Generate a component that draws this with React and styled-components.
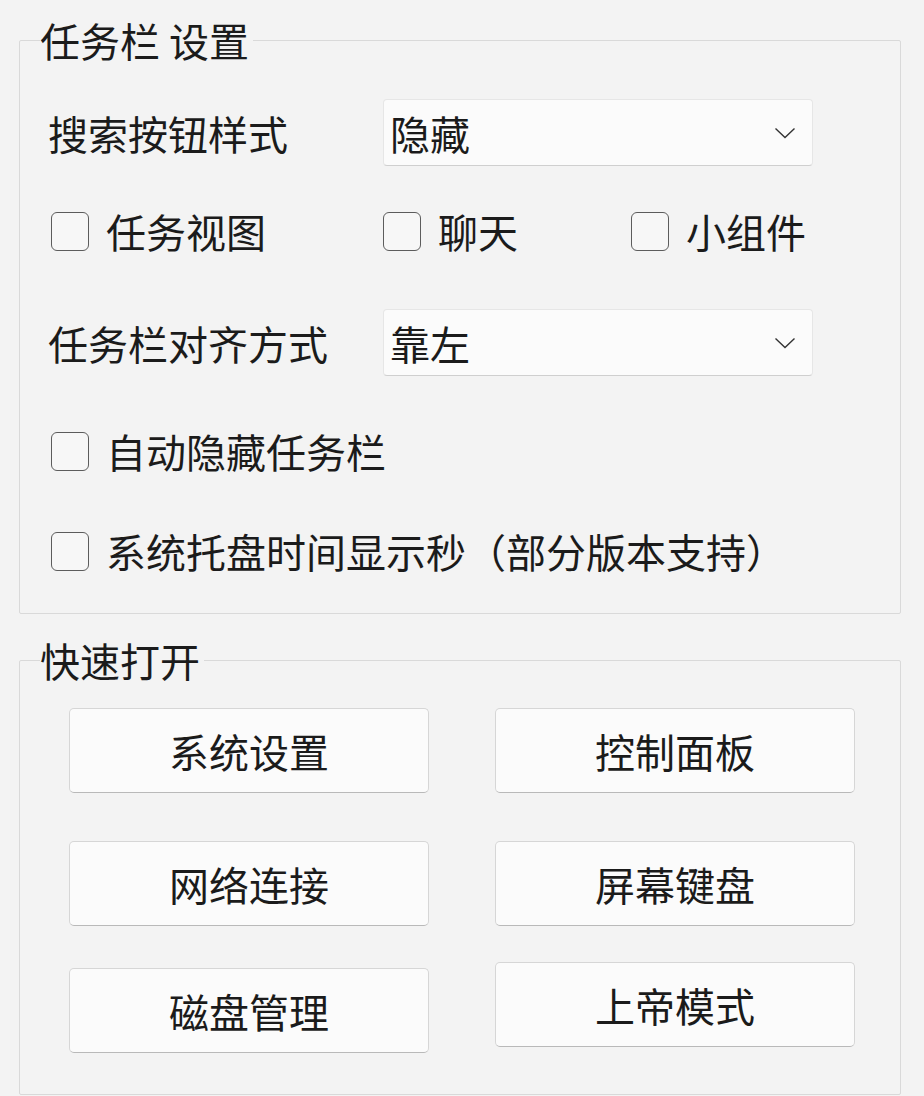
import styled, { createGlobalStyle } from 'styled-components'

const Global = createGlobalStyle`
    html, body {
        margin: 0;
        padding: 0;
        background: #f3f3f3;
    }
    body {
        font-family: "Noto Sans CJK SC", "Noto Sans", sans-serif;
        color: #1b1b1b;
    }
`
const Page = styled.div`
    padding: 17px 23px 4px 19px;
    display: flex;
    flex-direction: column;
`
const Group = styled.fieldset`
    margin: ${p => p.$gap || 0}px 0 0 0;
    padding: 0 ${p => p.$right}px ${p => p.$bottom}px ${p => p.$left}px;
    border: 1px solid #d9d9d9;
    border-radius: 2px;
    min-width: 0;
`
const Legend = styled.legend`
    margin-left: ${p => p.$shift}px;
    padding: 0 4px 0 0;
    font-size: 40px;
    line-height: 46px;
`
const Body = styled.div`
    display: flex;
    flex-direction: column;
`
const SelectRow = styled.div`
    display: grid;
    grid-template-columns: 335px 430px;
    align-items: center;
    margin-top: ${p => p.$top}px;
`
const Label = styled.span`
    font-size: 40px;
    line-height: 46px;
    white-space: nowrap;
`
const Select = styled.div`
    height: 67px;
    box-sizing: border-box;
    display: flex;
    align-items: center;
    justify-content: space-between;
    padding: 0 16px 0 6px;
    background: #fbfbfb;
    border: 1px solid #e6e6e6;
    border-bottom-color: #cfcfcf;
    border-radius: 4px;
`
const SelectText = styled.span`
    font-size: 40px;
    line-height: 46px;
`
const CheckRow = styled.div`
    display: flex;
    align-items: center;
    height: 39px;
    margin-top: ${p => p.$top}px;
    padding-left: 3px;
`
const CheckItem = styled.label`
    display: flex;
    align-items: center;
    gap: 17px;
    width: ${p => (p.$w ? `${p.$w}px` : 'auto')};
    height: 39px;
    font-size: 40px;
    line-height: 39px;
    white-space: nowrap;
`
const Box = styled.span`
    width: 38px;
    height: 39px;
    box-sizing: border-box;
    border: 1.5px solid #5c5c5c;
    border-radius: 6px;
    background: #f7f7f7;
    flex: none;
`
const Buttons = styled.div`
    display: grid;
    grid-template-columns: 360px 360px;
    column-gap: 66px;
    align-items: start;
    margin-top: 25px;
`
const Button = styled.button`
    height: 85px;
    margin-top: ${p => p.$top || 0}px;
    box-sizing: border-box;
    background: #fbfbfb;
    border: 1px solid #d6d6d6;
    border-bottom-color: #b9b9b9;
    border-radius: 5px;
    font-family: inherit;
    font-size: 40px;
    color: #1b1b1b;
    padding: 0;
    display: flex;
    align-items: center;
    justify-content: center;
`

const Chevron = () => (
    <svg width="22" height="12" viewBox="0 0 22 12" fill="none">
        <path d="M1.5 1.5 L11 10.5 L20.5 1.5" stroke="#333" strokeWidth="1.4" />
    </svg>
)

const Check = ({ children, w }) => (
    <CheckItem $w={w}>
        <Box />
        {children}
    </CheckItem>
)

const quick = [
    { name: '系统设置', top: 0 },
    { name: '控制面板', top: 0 },
    { name: '网络连接', top: 48 },
    { name: '屏幕键盘', top: 48 },
    { name: '磁盘管理', top: 42 },
    { name: '上帝模式', top: 36 },
]

const App = () => {
    return (
        <Page>
            <Global />
            <Group $left={28} $right={87} $bottom={42}>
                <Legend $shift={-8}>任务栏 设置</Legend>
                <Body>
                    <SelectRow $top={36}>
                        <Label>搜索按钮样式</Label>
                        <Select>
                            <SelectText>隐藏</SelectText>
                            <Chevron />
                        </Select>
                    </SelectRow>
                    <CheckRow $top={46}>
                        <Check w={332}>任务视图</Check>
                        <Check w={248}>聊天</Check>
                        <Check>小组件</Check>
                    </CheckRow>
                    <SelectRow $top={58}>
                        <Label>任务栏对齐方式</Label>
                        <Select>
                            <SelectText>靠左</SelectText>
                            <Chevron />
                        </Select>
                    </SelectRow>
                    <CheckRow $top={56}>
                        <Check>自动隐藏任务栏</Check>
                    </CheckRow>
                    <CheckRow $top={61}>
                        <Check>系统托盘时间显示秒（部分版本支持）</Check>
                    </CheckRow>
                </Body>
            </Group>
            <Group $gap={23} $left={49} $right={46} $bottom={41}>
                <Legend $shift={-29}>快速打开</Legend>
                <Buttons>
                    {quick.map(q => (
                        <Button key={q.name} $top={q.top}>{q.name}</Button>
                    ))}
                </Buttons>
            </Group>
        </Page>
    )
}

export default App
